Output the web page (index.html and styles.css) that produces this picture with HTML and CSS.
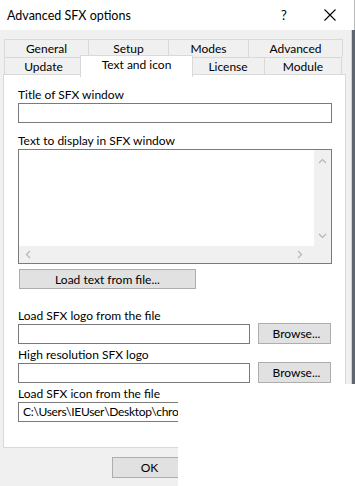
FILE: index.html
```html
<!DOCTYPE html>
<html lang="en">
<head>
    <meta charset="UTF-8">
    <title>Advanced SFX options</title>
    <link rel="stylesheet" href="styles.css">
</head>
<body>
    <div class="dialog">
        <div class="titlebar">
            <span class="caption">Advanced SFX options</span>
            <span class="help">?</span>
            <span class="close">
                <svg width="12" height="12" viewBox="0 0 12 12"><path d="M0.5 0.5 L11.5 11.5 M11.5 0.5 L0.5 11.5" stroke="#000" stroke-width="1.1" fill="none"/></svg>
            </span>
        </div>

        <div class="client">
            <div class="tabs">
                <div class="tab-row back">
                    <div class="tab w-general">General</div>
                    <div class="tab w-setup">Setup</div>
                    <div class="tab w-modes">Modes</div>
                    <div class="tab w-advanced">Advanced</div>
                </div>
                <div class="tab-row front">
                    <div class="tab w-update">Update</div>
                    <div class="tab w-text selected">Text and icon</div>
                    <div class="tab w-license">License</div>
                    <div class="tab w-module">Module</div>
                </div>
            </div>

            <div class="panel">
                <label class="lbl first">Title of SFX window</label>
                <div class="edit full"></div>

                <label class="lbl">Text to display in SFX window</label>
                <div class="memo">
                    <div class="memo-text"></div>
                    <div class="vscroll">
                        <svg width="9" height="6" viewBox="0 0 9 6"><path d="M1 5 L4.5 1.5 L8 5" stroke="#b5b5b5" stroke-width="1.2" fill="none"/></svg>
                        <svg width="9" height="6" viewBox="0 0 9 6"><path d="M1 1 L4.5 4.5 L8 1" stroke="#b5b5b5" stroke-width="1.2" fill="none"/></svg>
                    </div>
                    <div class="hscroll">
                        <svg width="6" height="9" viewBox="0 0 6 9"><path d="M5 1 L1.5 4.5 L5 8" stroke="#b5b5b5" stroke-width="1.2" fill="none"/></svg>
                        <svg width="6" height="9" viewBox="0 0 6 9"><path d="M1 1 L4.5 4.5 L1 8" stroke="#b5b5b5" stroke-width="1.2" fill="none"/></svg>
                    </div>
                    <div class="corner"></div>
                </div>
                <button class="btn load">Load text from file...</button>

                <label class="lbl gap">Load SFX logo from the file</label>
                <div class="file-row">
                    <div class="edit"></div>
                    <button class="btn browse">Browse...</button>
                </div>

                <label class="lbl">High resolution SFX logo</label>
                <div class="file-row">
                    <div class="edit"></div>
                    <button class="btn browse">Browse...</button>
                </div>

                <label class="lbl">Load SFX icon from the file</label>
                <div class="file-row">
                    <div class="edit path">C:\Users\IEUser\Desktop\chrome.ico</div>
                </div>
            </div>

            <div class="footer">
                <button class="btn ok">OK</button>
            </div>
        </div>

        <div class="cover"></div>
    </div>
</body>
</html>
```

FILE: styles.css
```css
:root {
    --face: #f0f0f0;
    --tab-border: #d9d9d9;
    --edit-border: #7a7a7a;
    --btn-face: #e1e1e1;
    --btn-border: #adadad;
}

* { box-sizing: border-box; }

body {
    margin: 0;
    background: #fff;
    font-family: Lato, "Liberation Sans", Arial, sans-serif;
    font-size: 12px;
    color: #000;
}

.dialog {
    position: relative;
    width: 355px;
    height: 486px;
    overflow: hidden;
    display: flex;
    flex-direction: column;
}

/* Заголовок окна */
.titlebar {
    height: 30px; flex: none;
    display: flex; align-items: center;
    background: #fff;
    padding-left: 7px;
    border-right: 1px solid #b9b9b9;
}
.caption { flex: 1; font-size: 12.5px; }
.help { width: 12px; margin-right: 31px; font-size: 13px; }
.close { width: 12px; margin-right: 18px; height: 12px; display: flex; }

.client {
    flex: 1;
    background: var(--face);
    border-right: 3px solid #5f6670;
    box-shadow: inset -1px 0 0 #d0d0d0;
}

/* Вкладки */
.tabs { margin: 9px 0 0 4px; width: 339px; }
.tab-row { display: flex; height: 18px; }
.tab {
    height: 18px; line-height: 17px;
    text-align: center;
    background: var(--face);
    border: 1px solid var(--tab-border);
    border-bottom: none;
    margin-right: -1px;
}
.front .tab { height: 19px; }
.tab.selected {
    position: relative; z-index: 2;
    background: #fff;
    height: 22px;
    margin-top: -2px;
    margin-left: -2px; margin-right: -2px;
    line-height: 18px;
}
.w-general { width: 85px; }
.w-setup { width: 81px; }
.w-modes { width: 81px; }
.w-advanced { width: 95px; }
.w-update { width: 79px; }
.w-text { width: 113px; }
.w-license { width: 74px; }
.w-module { width: 78px; }

.panel {
    margin: -1px 0 0 3px;
    width: 343px; height: 374px;
    background: #fff;
    border: 1px solid var(--tab-border);
    padding: 12px 0 0 14px;
    position: relative; z-index: 1;
}

.lbl { display: block; height: 16px; line-height: 16px; }
.lbl.gap { margin-top: 19px; }

.edit {
    height: 20px; width: 232px;
    border: 1px solid var(--edit-border);
    background: #fff;
    padding-left: 4px;
    line-height: 18px;
    white-space: nowrap; overflow: hidden;
}
.edit.full { width: 314px; margin-bottom: 10px; }

.memo {
    width: 314px; height: 115px;
    border: 1px solid var(--edit-border);
    display: grid;
    grid-template-columns: 1fr 17px;
    grid-template-rows: 1fr 17px;
}
.vscroll {
    background: var(--face);
    display: flex; flex-direction: column;
    justify-content: space-between; align-items: center;
    padding: 8px 0 7px;
}
.hscroll {
    background: var(--face);
    display: flex; justify-content: space-between; align-items: center;
    padding: 0 11px 0 6px;
}
.corner { background: var(--face); }

.btn {
    font: inherit;
    background: var(--btn-face);
    border: 1px solid var(--btn-border);
    height: 20px; padding: 0;
    color: #000;
}
.btn.load { display: block; width: 177px; margin: 5px 0 0 1px; }

.file-row { display: flex; gap: 8px; margin-bottom: 3px; }
.btn.browse { width: 73px; height: 21px; margin-top: -1px; padding-left: 4px; }
.edit.path { width: 314px; letter-spacing: -0.3px; }

.footer { padding: 9px 0 0 112px; }
.btn.ok { width: 75px; height: 21px; }

/* Белая область, закрывающая правый нижний угол */
.cover {
    position: absolute;
    left: 178px; top: 384px; right: 0; bottom: 0;
    background: #fff;
    z-index: 5;
}
```
